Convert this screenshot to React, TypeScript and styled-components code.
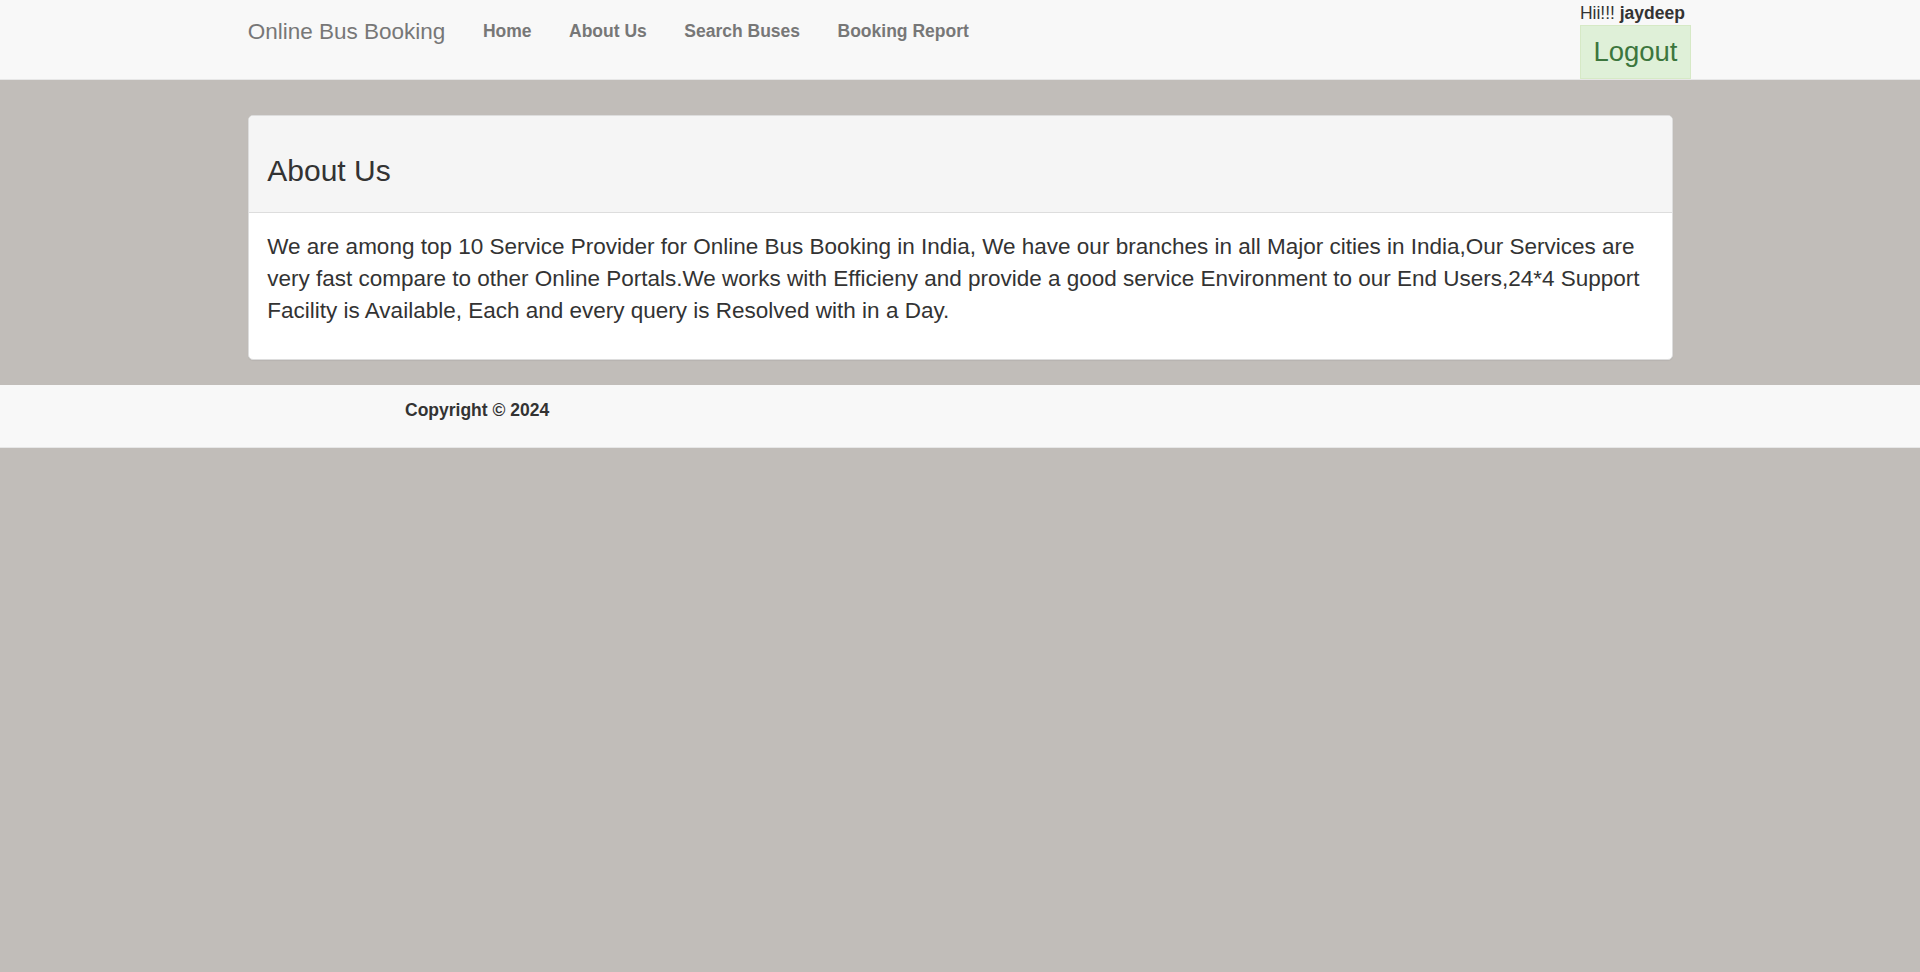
import React from "react";
import styled, { createGlobalStyle } from "styled-components";

const GlobalStyle = createGlobalStyle`
  html, body {
    margin: 0;
    padding: 0;
    background: #c1bdb9;
    font-family: "Liberation Sans", Arial, Helvetica, sans-serif;
    font-size: 17.5px;
    line-height: 25px;
    color: #333;
  }
  * { box-sizing: border-box; }
`;

const Navbar = styled.nav`
  background: #f8f8f8;
  border-bottom: 1px solid #e7e7e7;
  height: 80px;
`;

const NavInner = styled.div`
  width: 1462px;
  margin: 0 auto;
  padding: 0 18.75px;
  display: flex;
  align-items: flex-start;
  height: 79px;
`;

const Brand = styled.a`
  font-size: 22.5px;
  line-height: 25px;
  color: #777;
  padding: 18.75px 18.75px;
  margin-left: -18.75px;
  text-decoration: none;
`;

const NavList = styled.ul`
  display: flex;
  list-style: none;
  margin: 0;
  padding: 0;
`;

const NavLink = styled.a`
  display: block;
  padding: 18.75px 18.75px;
  line-height: 25px;
  font-weight: bold;
  color: #777;
  text-decoration: none;
`;

const UserBox = styled.div`
  margin-left: auto;
  margin-right: -18.75px;
  display: flex;
  flex-direction: column;
  align-items: flex-start;
`;

const Greeting = styled.div`
  line-height: 24px;
  padding-top: 1px;
  color: #333;
`;

const LogoutButton = styled.button`
  font-family: inherit;
  font-size: 27.5px;
  line-height: 40px;
  padding: 6px 12.5px;
  background: #dff0d8;
  color: #3c763d;
  border: 1px solid #d6e9c6;
  border-radius: 0;
  cursor: pointer;
`;

const Container = styled.main`
  width: 1425px;
  margin: 35px auto 25px;
`;

const Panel = styled.section`
  background: #fff;
  border: 1px solid #ddd;
  border-radius: 5px;
  box-shadow: 0 1px 1px rgba(0, 0, 0, 0.05);
  overflow: hidden;
`;

const PanelHeading = styled.div`
  background: #f5f5f5;
  border-bottom: 1px solid #ddd;
  padding: 12.5px 18.75px;
`;

const PanelTitle = styled.h3`
  font-size: 30px;
  font-weight: 500;
  line-height: 33px;
  margin: 25px 0 12.5px;
  color: #333;
`;

const PanelBody = styled.div`
  padding: 18.75px;
`;

const BodyText = styled.p`
  font-size: 22.5px;
  line-height: 32.1px;
  margin: 0 0 12.5px;
  color: #333;
`;

const Footer = styled.footer`
  background: #f8f8f8;
  border-bottom: 1px solid #e7e7e7;
  height: 63px;
  padding: 13.5px 0 0 405px;
`;

const FooterText = styled.div`
  font-weight: bold;
  line-height: 25px;
  color: #333;
`;

export default function App() {
  const links = ["Home", "About Us", "Search Buses", "Booking Report"];
  return (
    <>
      <GlobalStyle />
      <Navbar>
        <NavInner>
          <Brand href="#">Online Bus Booking</Brand>
          <NavList>
            {links.map((l) => (
              <li key={l}>
                <NavLink href="#">{l}</NavLink>
              </li>
            ))}
          </NavList>
          <UserBox>
            <Greeting>
              Hii!!! <b>jaydeep</b>
            </Greeting>
            <LogoutButton>Logout</LogoutButton>
          </UserBox>
        </NavInner>
      </Navbar>
      <Container>
        <Panel>
          <PanelHeading>
            <PanelTitle>About Us</PanelTitle>
          </PanelHeading>
          <PanelBody>
            <BodyText>
              We are among top 10 Service Provider for Online Bus Booking in India, We have our branches in all Major cities in India,Our Services are very fast compare to other Online Portals.We works with Efficieny and provide a good service Environment to our End Users,24*4 Support Facility is Available, Each and every query is Resolved with in a Day.
            </BodyText>
          </PanelBody>
        </Panel>
      </Container>
      <Footer>
        <FooterText>Copyright © 2024</FooterText>
      </Footer>
    </>
  );
}
